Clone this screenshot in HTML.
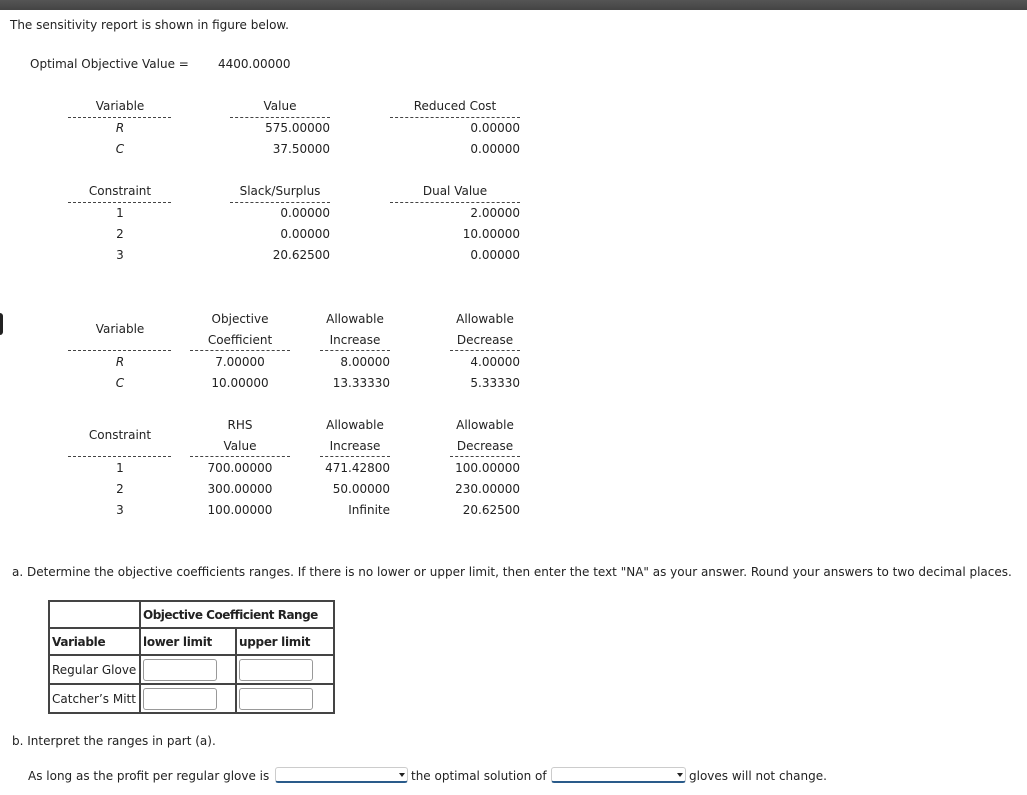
<!DOCTYPE html>
<html><head><meta charset="utf-8"><style>
*{margin:0;padding:0;box-sizing:border-box}
body{width:1027px;height:795px;background:#fff;font-family:"DejaVu Sans",Verdana,"Liberation Sans",sans-serif;font-size:12px;color:#222;position:relative;overflow:hidden}
.t{position:absolute;line-height:16px;white-space:nowrap;margin-top:1px}
.c{transform:translateX(-50%)}
.r{transform:translateX(-100%)}
.d{position:absolute;height:0;border-top:1px dashed #444}
.bar{position:absolute;left:0;top:0;width:1027px;height:10px;background:linear-gradient(#555,#444)}
table{position:absolute;left:48px;top:600px;border-collapse:collapse;table-layout:fixed;width:285px}
td{border:2px solid #444;padding:0 2px;font-size:12px;white-space:nowrap;overflow:hidden}
td.b{font-weight:bold;font-size:12px;letter-spacing:-0.3px}
.in{display:inline-block;width:74px;height:22px;border:1px solid #999;border-radius:3px;vertical-align:middle}
.sel{position:absolute;top:767px;height:16px;border:1px solid #ccc;border-bottom:2px solid #2a5b8a;border-radius:3px}
.sel:after{content:"";position:absolute;right:2px;top:5px;border-left:3px solid transparent;border-right:3px solid transparent;border-top:4px solid #222}
</style></head><body>
<div class="bar"></div>
<div style="position:absolute;left:0;top:313px;width:3px;height:22px;background:#222;border-radius:0 3px 3px 0"></div>
<div class="t" style="left:10px;top:16px">The sensitivity report is shown in figure below.</div>
<div class="t" style="left:30px;top:55px">Optimal Objective Value =</div>
<div class="t" style="left:218px;top:55px">4400.00000</div>

<div class="t c" style="left:120px;top:97px">Variable</div>
<div class="t c" style="left:280px;top:97px">Value</div>
<div class="t c" style="left:455px;top:97px">Reduced Cost</div>
<div class="d" style="left:68px;width:103px;top:117px"></div>
<div class="d" style="left:230px;width:100px;top:117px"></div>
<div class="d" style="left:390px;width:130px;top:117px"></div>
<div class="t c" style="left:120px;top:119px;font-style:italic">R</div>
<div class="t c" style="left:120px;top:140px;font-style:italic">C</div>
<div class="t r" style="left:330px;top:119px">575.00000</div>
<div class="t r" style="left:330px;top:140px">37.50000</div>
<div class="t r" style="left:520px;top:119px">0.00000</div>
<div class="t r" style="left:520px;top:140px">0.00000</div>

<div class="t c" style="left:120px;top:182px">Constraint</div>
<div class="t c" style="left:280px;top:182px">Slack/Surplus</div>
<div class="t c" style="left:455px;top:182px">Dual Value</div>
<div class="d" style="left:68px;width:103px;top:202px"></div>
<div class="d" style="left:230px;width:100px;top:202px"></div>
<div class="d" style="left:390px;width:130px;top:202px"></div>
<div class="t c" style="left:120px;top:204px">1</div>
<div class="t c" style="left:120px;top:225px">2</div>
<div class="t c" style="left:120px;top:246px">3</div>
<div class="t r" style="left:330px;top:204px">0.00000</div>
<div class="t r" style="left:330px;top:225px">0.00000</div>
<div class="t r" style="left:330px;top:246px">20.62500</div>
<div class="t r" style="left:520px;top:204px">2.00000</div>
<div class="t r" style="left:520px;top:225px">10.00000</div>
<div class="t r" style="left:520px;top:246px">0.00000</div>

<div class="t c" style="left:120px;top:320px">Variable</div>
<div class="t c" style="left:240px;top:310px">Objective</div>
<div class="t c" style="left:240px;top:331px">Coefficient</div>
<div class="t c" style="left:355px;top:310px">Allowable</div>
<div class="t c" style="left:355px;top:331px">Increase</div>
<div class="t c" style="left:485px;top:310px">Allowable</div>
<div class="t c" style="left:485px;top:331px">Decrease</div>
<div class="d" style="left:68px;width:103px;top:350px"></div>
<div class="d" style="left:190px;width:100px;top:350px"></div>
<div class="d" style="left:320px;width:70px;top:350px"></div>
<div class="d" style="left:450px;width:70px;top:350px"></div>
<div class="t c" style="left:120px;top:353px;font-style:italic">R</div>
<div class="t c" style="left:120px;top:374px;font-style:italic">C</div>
<div class="t c" style="left:240px;top:353px">7.00000</div>
<div class="t c" style="left:240px;top:374px">10.00000</div>
<div class="t r" style="left:390px;top:353px">8.00000</div>
<div class="t r" style="left:390px;top:374px">13.33330</div>
<div class="t r" style="left:520px;top:353px">4.00000</div>
<div class="t r" style="left:520px;top:374px">5.33330</div>

<div class="t c" style="left:120px;top:426px">Constraint</div>
<div class="t c" style="left:240px;top:416px">RHS</div>
<div class="t c" style="left:240px;top:437px">Value</div>
<div class="t c" style="left:355px;top:416px">Allowable</div>
<div class="t c" style="left:355px;top:437px">Increase</div>
<div class="t c" style="left:485px;top:416px">Allowable</div>
<div class="t c" style="left:485px;top:437px">Decrease</div>
<div class="d" style="left:68px;width:103px;top:456px"></div>
<div class="d" style="left:190px;width:100px;top:456px"></div>
<div class="d" style="left:320px;width:70px;top:456px"></div>
<div class="d" style="left:450px;width:70px;top:456px"></div>
<div class="t c" style="left:120px;top:459px">1</div>
<div class="t c" style="left:120px;top:480px">2</div>
<div class="t c" style="left:120px;top:501px">3</div>
<div class="t c" style="left:240px;top:459px">700.00000</div>
<div class="t c" style="left:240px;top:480px">300.00000</div>
<div class="t c" style="left:240px;top:501px">100.00000</div>
<div class="t r" style="left:390px;top:459px">471.42800</div>
<div class="t r" style="left:390px;top:480px">50.00000</div>
<div class="t r" style="left:390px;top:501px">Infinite</div>
<div class="t r" style="left:520px;top:459px">100.00000</div>
<div class="t r" style="left:520px;top:480px">230.00000</div>
<div class="t r" style="left:520px;top:501px">20.62500</div>

<div class="t" style="left:12px;top:563px">a. Determine the objective coefficients ranges. If there is no lower or upper limit, then enter the text "NA" as your answer. Round your answers to two decimal places.</div>

<table>
<colgroup><col style="width:91px"><col style="width:96px"><col style="width:98px"></colgroup>
<tr style="height:27px"><td></td><td colspan="2" class="b" style="letter-spacing:-0.5px">Objective Coefficient Range</td></tr>
<tr style="height:27px"><td class="b">Variable</td><td class="b">lower limit</td><td class="b">upper limit</td></tr>
<tr style="height:29px"><td>Regular Glove</td><td><span class="in"></span></td><td><span class="in"></span></td></tr>
<tr style="height:29px"><td>Catcher’s Mitt</td><td><span class="in"></span></td><td><span class="in"></span></td></tr>
</table>

<div class="t" style="left:12px;top:732px">b. Interpret the ranges in part (a).</div>
<div class="t" style="left:28px;top:767px">As long as the profit per regular glove is</div>
<div class="sel" style="left:275px;width:133px"></div>
<div class="t" style="left:411px;top:767px">the optimal solution of</div>
<div class="sel" style="left:551px;width:135px"></div>
<div class="t" style="left:689px;top:767px">gloves will not change.</div>
</body></html>
